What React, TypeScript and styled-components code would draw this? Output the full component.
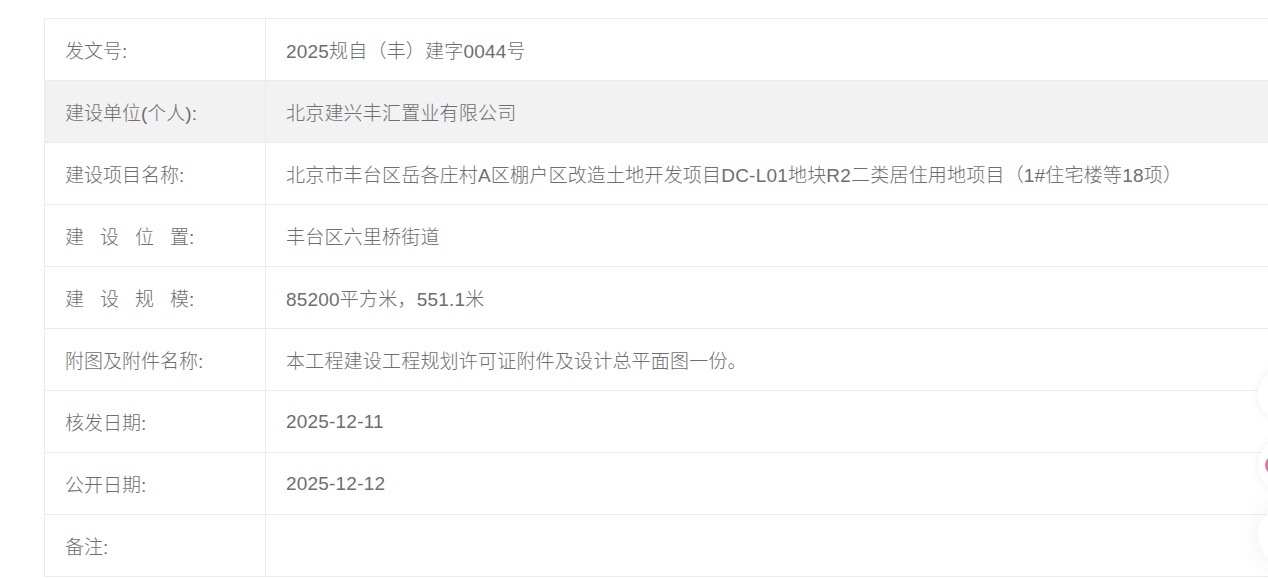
import React from "react";
import styled, { createGlobalStyle } from "styled-components";

interface Row
{
    label: React.ReactNode;
    value: string;
    shaded?: boolean;
}

const content = function App ()
{
    const rows: Row[] = [
        { label: "发文号:", value: "2025规自（丰）建字0044号" },
        { label: "建设单位(个人):", value: "北京建兴丰汇置业有限公司", shaded: true },
        { label: "建设项目名称:", value: "北京市丰台区岳各庄村A区棚户区改造土地开发项目DC-L01地块R2二类居住用地项目（1#住宅楼等18项）" },
        { label: <><Spread>建设位</Spread>置:</>, value: "丰台区六里桥街道" },
        { label: <><Spread>建设规</Spread>模:</>, value: "85200平方米，551.1米" },
        { label: "附图及附件名称:", value: "本工程建设工程规划许可证附件及设计总平面图一份。" },
        { label: "核发日期:", value: "2025-12-11" },
        { label: "公开日期:", value: "2025-12-12" },
        { label: "备注:", value: "" },
    ];

    return (
        <>
            <Global/>
            <Page>
                <Table>
                    <tbody>
                        {rows.map((row, i) => (
                            <Tr key={i} $shaded={row.shaded}>
                                <Label>{row.label}</Label>
                                <Value>{row.value}</Value>
                            </Tr>
                        ))}
                    </tbody>
                </Table>
            </Page>
            <SideDock>
                <DockButton/>
                <DockButton><Dot/></DockButton>
                <DockButton $faint/>
            </SideDock>
        </>
    );
};

/*
|--------------------------------------------------------------------------
| Styled
|--------------------------------------------------------------------------
*/

const Global = createGlobalStyle`
    html, body {
        margin: 0;
        padding: 0;
        background: #fff;
        overflow: hidden;
    }
    body {
        font-family: "Liberation Sans", "Noto Sans CJK SC", sans-serif;
    }
`;

const Page = styled.div`
    padding: 18px 0 0 44px;
    width: 1320px;
`;

const Table = styled.table`
    width: 100%;
    border-collapse: collapse;
    border: 1px solid #ebebeb;
    table-layout: fixed;
`;

const Tr = styled.tr<{ $shaded?: boolean }>`
    height: 62px;
    background: ${p => p.$shaded ? "#f2f2f2" : "#fff"};
`;

const Cell = styled.td`
    border: 1px solid #ebebeb;
    padding: 0 20px;
    font-size: 19px;
    font-weight: 300;
    color: #6e6e6e;
    vertical-align: middle;
    white-space: nowrap;
`;

const Label = styled(Cell)`
    width: 180px;
`;

const Value = styled(Cell)`
    letter-spacing: 0.2px;
`;

const Spread = styled.span`
    letter-spacing: 16px;
`;

const SideDock = styled.div`
    position: fixed;
    left: 1258px;
    top: 366px;
    display: flex;
    flex-direction: column;
    gap: 12px;
`;

const DockButton = styled.div<{ $faint?: boolean }>`
    width: 58px;
    height: 58px;
    border-radius: 50%;
    background: #fff;
    box-shadow: 0 0 ${p => p.$faint ? "30px" : "10px"} rgba(0,0,0,${p => p.$faint ? "0.07" : "0.07"});
    display: flex;
    align-items: center;
    padding-left: 7px;
    box-sizing: border-box;
`;

const Dot = styled.span`
    width: 20px;
    height: 20px;
    border-radius: 50%;
    background: #e8739f;
`;

Object.freeze(content);
export default content;
